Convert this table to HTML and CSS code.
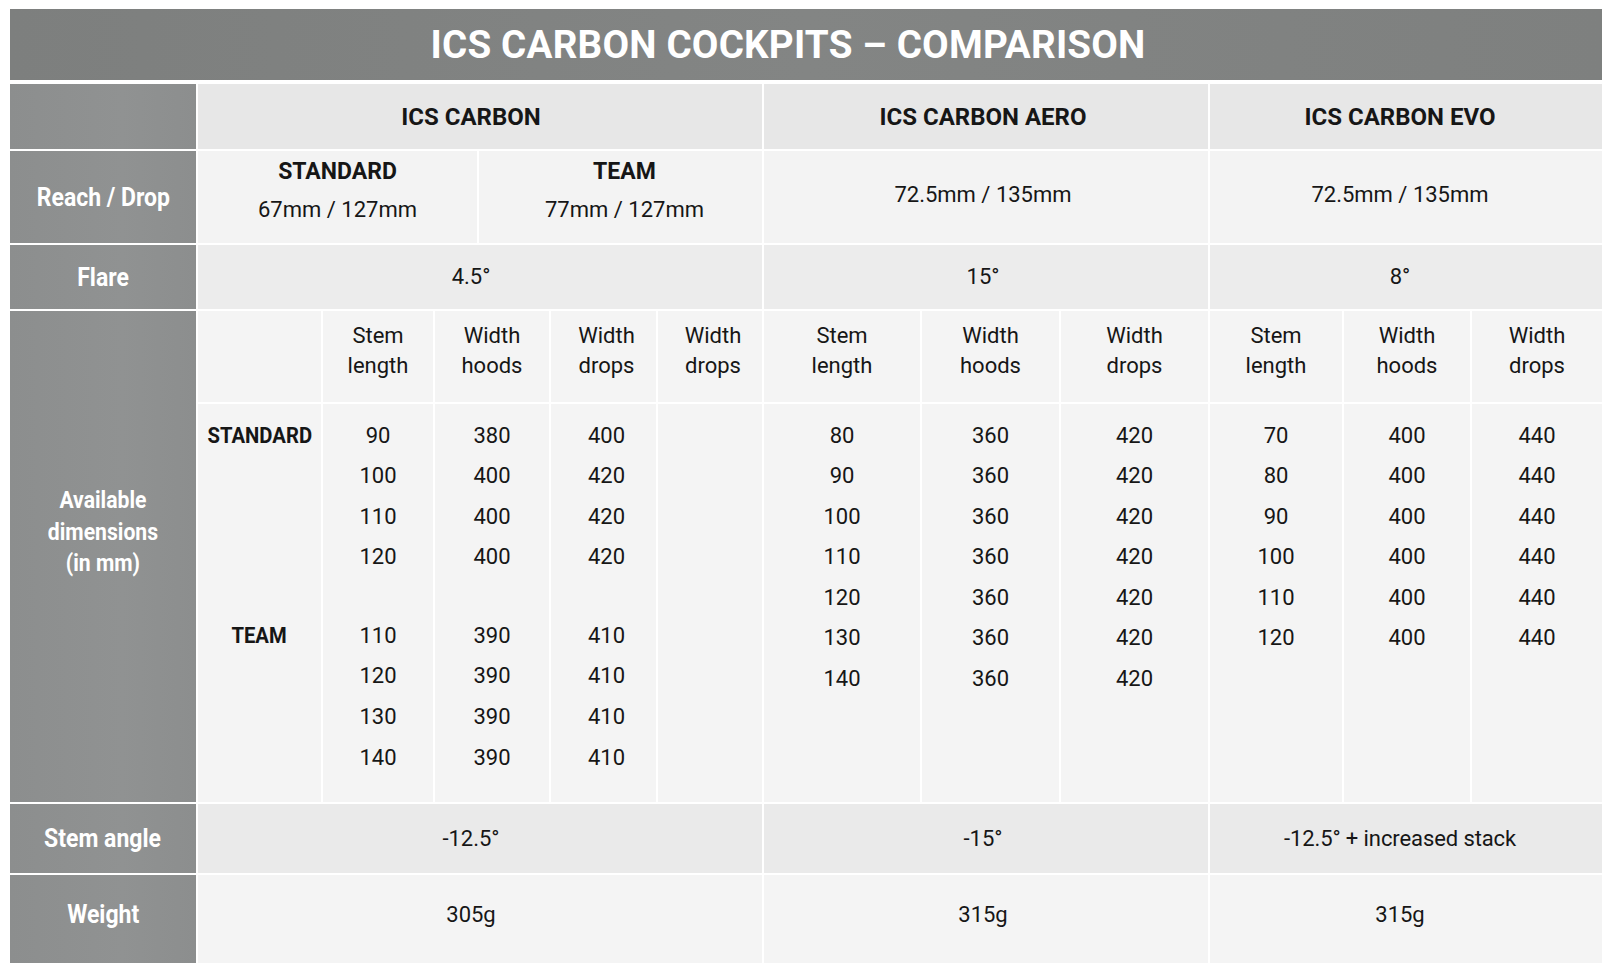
FILE: index.html
```html
<!DOCTYPE html>
<html lang="en">
<head>
<meta charset="utf-8">
<title>ICS Carbon Cockpits – Comparison</title>
<link rel="stylesheet" href="styles.css">
</head>
<body>
<div class="page">
  <h1 class="title">ICS CARBON COCKPITS – COMPARISON</h1>
  <div class="table">
    <!-- header row -->
    <div class="cell label r-head"></div>
    <div class="cell head c-carbon">ICS CARBON</div>
    <div class="cell head c-aero">ICS CARBON AERO</div>
    <div class="cell head c-evo">ICS CARBON EVO</div>

    <!-- reach / drop -->
    <div class="cell label"><span class="lbl">Reach / Drop</span></div>
    <div class="cell reach two c-std"><span class="variant">STANDARD</span><span>67mm / 127mm</span></div>
    <div class="cell reach two c-team"><span class="variant">TEAM</span><span>77mm / 127mm</span></div>
    <div class="cell reach c-aero"><span>72.5mm / 135mm</span></div>
    <div class="cell reach c-evo"><span>72.5mm / 135mm</span></div>

    <!-- flare -->
    <div class="cell label"><span class="lbl">Flare</span></div>
    <div class="cell flare c-carbon">4.5°</div>
    <div class="cell flare c-aero">15°</div>
    <div class="cell flare c-evo">8°</div>

    <!-- available dimensions -->
    <div class="cell label dims-label"><span class="lbl">Available<br>dimensions<br>(in mm)</span></div>
    <div class="cell sub"></div>
    <div class="cell sub">Stem<br>length</div>
    <div class="cell sub span2">Width<br>hoods</div>
    <div class="cell sub nudge">Width<br>drops</div>
    <div class="cell sub nudge">Width<br>drops</div>
    <div class="cell sub">Stem<br>length</div>
    <div class="cell sub">Width<br>hoods</div>
    <div class="cell sub">Width<br>drops</div>
    <div class="cell sub">Stem<br>length</div>
    <div class="cell sub">Width<br>hoods</div>
    <div class="cell sub">Width<br>drops</div>

    <div class="cell data variants">
      <span class="vname">STANDARD</span><span></span><span></span><span></span><span class="gap"></span>
      <span class="vname">TEAM</span>
    </div>
    <div class="cell data">
      <span>90</span><span>100</span><span>110</span><span>120</span><span class="gap"></span>
      <span>110</span><span>120</span><span>130</span><span>140</span>
    </div>
    <div class="cell data span2">
      <span>380</span><span>400</span><span>400</span><span>400</span><span class="gap"></span>
      <span>390</span><span>390</span><span>390</span><span>390</span>
    </div>
    <div class="cell data nudge">
      <span>400</span><span>420</span><span>420</span><span>420</span><span class="gap"></span>
      <span>410</span><span>410</span><span>410</span><span>410</span>
    </div>
    <div class="cell data"></div>
    <div class="cell data">
      <span>80</span><span>90</span><span>100</span><span>110</span><span>120</span><span>130</span><span>140</span>
    </div>
    <div class="cell data">
      <span>360</span><span>360</span><span>360</span><span>360</span><span>360</span><span>360</span><span>360</span>
    </div>
    <div class="cell data">
      <span>420</span><span>420</span><span>420</span><span>420</span><span>420</span><span>420</span><span>420</span>
    </div>
    <div class="cell data">
      <span>70</span><span>80</span><span>90</span><span>100</span><span>110</span><span>120</span>
    </div>
    <div class="cell data">
      <span>400</span><span>400</span><span>400</span><span>400</span><span>400</span><span>400</span>
    </div>
    <div class="cell data">
      <span>440</span><span>440</span><span>440</span><span>440</span><span>440</span><span>440</span>
    </div>

    <!-- stem angle -->
    <div class="cell label"><span class="lbl">Stem angle</span></div>
    <div class="cell angle c-carbon">-12.5°</div>
    <div class="cell angle c-aero">-15°</div>
    <div class="cell angle c-evo">-12.5° + increased stack</div>

    <!-- weight -->
    <div class="cell label weight-label"><span class="lbl">Weight</span></div>
    <div class="cell weight c-carbon">305g</div>
    <div class="cell weight c-aero">315g</div>
    <div class="cell weight c-evo">315g</div>
  </div>
</div>
</body>
</html>
```

FILE: styles.css
```css
html, body {
  margin: 0;
  padding: 0;
  background: #ffffff;
}

body {
  font-family: Roboto, "Liberation Sans", Arial, sans-serif;
  color: #161616;
}

.page {
  padding: 9px 10px 0 10px;
  width: 1592px;
}

.title {
  margin: 0 0 4px 0;
  height: 71px;
  display: flex;
  align-items: center;
  justify-content: center;
  padding-right: 36px;
  box-sizing: border-box;
  background: linear-gradient(90deg, #7d7f7e 0%, #838584 50%, #7e807f 100%);
  color: #ffffff;
  font-size: 38.6px;
  font-weight: 700;
  letter-spacing: 0.2px;
}

.table {
  display: grid;
  grid-template-columns: 186px 123px 110px 42px 70px 105px 104px 156px 137px 147px 132px 126px 130px;
  grid-template-rows: 65px 92px 64px 91px 398px 69px 88px;
  gap: 2px;
  background: #ffffff;
}

.cell {
  display: flex;
  align-items: center;
  justify-content: center;
  text-align: center;
  font-size: 22px;
  line-height: 30px;
  box-sizing: border-box;
}

.label {
  grid-column: 1;
  background: linear-gradient(90deg, #8c8e8e 0%, #909292 60%, #8c8e8e 100%);
  color: #ffffff;
  font-weight: 700;
  font-size: 25px;
  line-height: 31px;
}

.lbl {
  display: inline-block;
  transform: scaleX(0.92);
}

.c-carbon { grid-column: 2 / 8; padding-right: 18px; }
.c-std { grid-column: 2 / 5; }
.c-team { grid-column: 5 / 8; padding-left: 8px; }
.c-aero { grid-column: 8 / 11; padding-right: 6px; }
.c-evo { grid-column: 11 / 14; padding-right: 12px; }

.head {
  background: #e7e7e7;
  font-weight: 700;
  font-size: 24px;
}

.reach {
  background: #f3f3f3;
  flex-direction: column;
  line-height: 38px;
  padding-bottom: 5px;
}

.reach.two {
  padding-bottom: 12px;
}

.variant {
  font-weight: 700;
  font-size: 23px;
}

.flare {
  background: #ececec;
}

.dims-label {
  grid-row: 4 / 6;
  align-items: flex-start;
  padding-top: 174px;
  font-size: 23px;
  line-height: 31.5px;
}

.sub {
  background: #f4f4f4;
  align-items: flex-start;
  padding-top: 10px;
}

.span2 { grid-column: span 2; }

.nudge { padding-left: 6px; }

.data {
  background: #f4f4f4;
  flex-direction: column;
  justify-content: flex-start;
  padding-top: 11.5px;
  line-height: 40.6px;
}

.data span {
  display: block;
  height: 40.6px;
}

.data span.gap {
  height: 38px;
}

.vname {
  font-weight: 700;
  font-size: 22px;
  transform: scaleX(0.92);
}

.angle {
  background: #eaeaea;
}

.angle.c-evo {
  letter-spacing: -0.1px;
}

.weight,
.weight-label {
  background-color: #f4f4f4;
  padding-bottom: 8px;
}

.weight-label {
  background: linear-gradient(90deg, #8c8e8e 0%, #909292 60%, #8c8e8e 100%);
  padding-bottom: 10px;
}
```
